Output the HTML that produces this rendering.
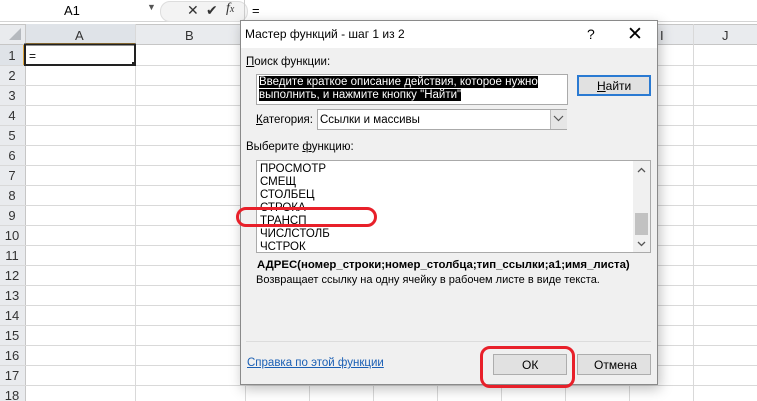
<!DOCTYPE html><html><head><meta charset="utf-8"><style>
body{margin:0;width:757px;height:401px;overflow:hidden;background:#fff;font-family:"Liberation Sans","DejaVu Sans",sans-serif;font-size:11px;position:relative}
.a{position:absolute}
.t{position:absolute;white-space:nowrap;color:#000}
</style></head><body>
<div class="a" style="left:0;top:0;width:757px;height:21px;background:#fff;border-bottom:1px solid #d4d4d4"></div>
<div class="t" style="left:64px;top:3px;font-size:13px">A1</div>
<div class="t" style="left:147px;top:2px;font-size:9px;color:#555">▼</div>
<div class="a" style="left:160px;top:1px;width:86px;height:19px;border-radius:10px;background:#f3f3f3;border:1px solid #ddd"></div>
<div class="t" style="left:187px;top:2px;font-size:14px;color:#333">✕</div>
<div class="t" style="left:206px;top:2px;font-size:14px;color:#333">✔</div>
<div class="t" style="left:226px;top:1px;font-size:14px;font-style:italic;font-family:'Liberation Serif',serif;color:#333">f<span style="font-size:10px">x</span></div>
<div class="a" style="left:244px;top:0;width:1px;height:21px;background:#ccc"></div>
<div class="t" style="left:252px;top:3px;font-size:13px">=</div>
<div class="a" style="left:0;top:24px;width:757px;height:21px;background:#e9ebee;border-bottom:1px solid #c6c6c6;border-top:1px solid #c6c6c6;box-sizing:border-box"></div>
<div class="a" style="left:25px;top:24px;width:110px;height:21px;background:#dfe3e8;border-bottom:2px solid #e0a63c;box-sizing:border-box"></div>
<div class="t" style="left:75px;top:28px;font-size:13px;color:#333">A</div>
<div class="t" style="left:185px;top:28px;font-size:13px;color:#333">B</div>
<div class="t" style="left:660px;top:28px;font-size:13px;color:#333">I</div>
<div class="t" style="left:722px;top:28px;font-size:13px;color:#333">J</div>
<div class="a" style="left:0;top:45px;width:25px;height:356px;background:#e9ebee;border-right:1px solid #c6c6c6"></div>
<div class="a" style="left:0;top:45px;width:25px;height:20px;background:#dfe3e8;border-right:2px solid #e0a63c;box-sizing:border-box"></div>
<svg class="a" style="left:0;top:0" width="757" height="401">
<g stroke="#d9d9d9" stroke-width="1">
<line x1="25.5" y1="24" x2="25.5" y2="401" stroke="#c6c6c6"/>
<line x1="135.5" y1="24" x2="135.5" y2="401"/><line x1="245.5" y1="24" x2="245.5" y2="401"/>
<line x1="309.5" y1="24" x2="309.5" y2="401"/><line x1="373.5" y1="24" x2="373.5" y2="401"/>
<line x1="437.5" y1="24" x2="437.5" y2="401"/><line x1="501.5" y1="24" x2="501.5" y2="401"/>
<line x1="565.5" y1="24" x2="565.5" y2="401"/><line x1="629.5" y1="24" x2="629.5" y2="401"/>
<line x1="693.5" y1="24" x2="693.5" y2="401"/>
<line x1="0" y1="65.5" x2="757" y2="65.5"/><line x1="0" y1="85.5" x2="757" y2="85.5"/><line x1="0" y1="105.5" x2="757" y2="105.5"/><line x1="0" y1="125.5" x2="757" y2="125.5"/><line x1="0" y1="145.5" x2="757" y2="145.5"/><line x1="0" y1="165.5" x2="757" y2="165.5"/><line x1="0" y1="185.5" x2="757" y2="185.5"/><line x1="0" y1="205.5" x2="757" y2="205.5"/><line x1="0" y1="225.5" x2="757" y2="225.5"/><line x1="0" y1="245.5" x2="757" y2="245.5"/><line x1="0" y1="265.5" x2="757" y2="265.5"/><line x1="0" y1="285.5" x2="757" y2="285.5"/><line x1="0" y1="305.5" x2="757" y2="305.5"/><line x1="0" y1="325.5" x2="757" y2="325.5"/><line x1="0" y1="345.5" x2="757" y2="345.5"/><line x1="0" y1="365.5" x2="757" y2="365.5"/><line x1="0" y1="385.5" x2="757" y2="385.5"/>
</g>
<rect x="25" y="44.5" width="110" height="20.5" fill="none" stroke="#222" stroke-width="2"/>
<rect x="132" y="62" width="4" height="4" fill="#222"/>
<polygon points="9,40 21,40 21,28" fill="#b5b9be"/>
<g font-size="13" fill="#333" text-anchor="middle" font-family="Liberation Sans, sans-serif">
<text x="12" y="60">1</text><text x="12" y="80">2</text><text x="12" y="100">3</text><text x="12" y="120">4</text><text x="12" y="140">5</text><text x="12" y="160">6</text><text x="12" y="180">7</text><text x="12" y="200">8</text><text x="12" y="220">9</text><text x="12" y="240">10</text><text x="12" y="260">11</text><text x="12" y="280">12</text><text x="12" y="300">13</text><text x="12" y="320">14</text><text x="12" y="340">15</text><text x="12" y="360">16</text><text x="12" y="380">17</text><text x="12" y="400">18</text>
</g>
<text x="29" y="60" font-size="12" font-family="Liberation Sans, sans-serif">=</text>
</svg>
<div class="a" style="left:240px;top:20px;width:418px;height:365px;background:#f0f0f0;border:1px solid #8a8a8a;box-sizing:border-box;box-shadow:2px 4px 12px rgba(0,0,0,0.25)"></div>
<div class="a" style="left:241px;top:21px;width:416px;height:27px;background:#fff"></div>
<div class="t" style="left:245px;top:27px;font-size:12px">Мастер функций - шаг 1 из 2</div>
<div class="t" style="left:587px;top:26px;font-size:14px">?</div>
<div class="t" style="left:627px;top:23px;font-size:19px;font-weight:300">✕</div>
<div class="t" style="left:246px;top:56px;font-size:11.5px"><u>П</u>оиск функции:</div>
<div class="a" style="left:256px;top:74px;width:312px;height:31px;background:#fff;border:1px solid #aaa;box-sizing:border-box"></div>
<div class="t" style="left:259px;top:76px;font-size:11.5px;color:#fff;line-height:13px"><span style="background:#000">Введите краткое описание действия, которое нужно </span><br><span style="background:#000">выполнить, и нажмите кнопку "Найти"</span></div>
<div class="a" style="left:577px;top:75px;width:74px;height:21px;background:#e1e1e1;border:2px solid #2a7ad2;box-sizing:border-box"></div>
<div class="t" style="left:597px;top:79px;font-size:12px"><u>Н</u>айти</div>
<div class="t" style="left:256px;top:114px;font-size:11.5px"><u>К</u>атегория:</div>
<div class="a" style="left:317px;top:109px;width:250px;height:21px;background:#fff;border:1px solid #aaa;box-sizing:border-box"></div>
<div class="a" style="left:550px;top:110px;width:16px;height:19px;background:#e6e6e6;border-left:1px solid #bbb"></div>
<svg class="a" style="left:553px;top:115px" width="11" height="8"><path d="M1 1 L5.5 5.5 L10 1" fill="none" stroke="#555" stroke-width="1.2"/></svg>
<div class="t" style="left:320px;top:114px;font-size:11.5px">Ссылки и массивы</div>
<div class="t" style="left:246px;top:141px;font-size:11.5px">Выберите <u>ф</u>ункцию:</div>
<div class="a" style="left:256px;top:160px;width:395px;height:93px;background:#fff;border:1px solid #aaa;box-sizing:border-box;overflow:hidden">
<div style="position:absolute;left:3px;top:2px;font-size:11.5px;line-height:13px;color:#000">ПРОСМОТР<br>СМЕЩ<br>СТОЛБЕЦ<br>СТРОКА<br>ТРАНСП<br>ЧИСЛСТОЛБ<br>ЧСТРОК</div>
<div style="position:absolute;right:0;top:0;width:17px;height:93px;background:#f0f0f0"></div>
<div style="position:absolute;right:2px;top:52px;width:13px;height:22px;background:#c2c2c2"></div>
<svg style="position:absolute;right:4px;top:6px" width="9" height="6"><path d="M1 5 L4.5 1.5 L8 5" fill="none" stroke="#555" stroke-width="1.3"/></svg>
<svg style="position:absolute;right:4px;top:80px" width="9" height="6"><path d="M1 1 L4.5 4.5 L8 1" fill="none" stroke="#555" stroke-width="1.3"/></svg>
</div>
<div class="t" style="left:257px;top:259px;font-size:11.4px;font-weight:bold">АДРЕС(номер_строки;номер_столбца;тип_ссылки;а1;имя_листа)</div>
<div class="t" style="left:256px;top:274px;font-size:11px">Возвращает ссылку на одну ячейку в рабочем листе в виде текста.</div>
<div class="a" style="left:246px;top:341px;width:405px;height:1px;background:#dcdcdc"></div>
<div class="t" style="left:247px;top:357px;font-size:11.5px;color:#1a5fb4;text-decoration:underline">Справка по этой функции</div>
<div class="a" style="left:493px;top:354px;width:74px;height:21px;background:#e1e1e1;border:1px solid #adadad;box-sizing:border-box"></div>
<div class="t" style="left:522px;top:358px;font-size:12px">ОК</div>
<div class="a" style="left:577px;top:354px;width:74px;height:21px;background:#e1e1e1;border:1px solid #adadad;box-sizing:border-box"></div>
<div class="t" style="left:594px;top:358px;font-size:12px">Отмена</div>
<div class="a" style="left:236px;top:207px;width:141px;height:20px;border:3px solid #e8202a;border-radius:10px;box-sizing:border-box"></div>
<div class="a" style="left:480px;top:346px;width:95px;height:42px;border:3px solid #e8202a;border-radius:10px;box-sizing:border-box"></div>
</body></html>
